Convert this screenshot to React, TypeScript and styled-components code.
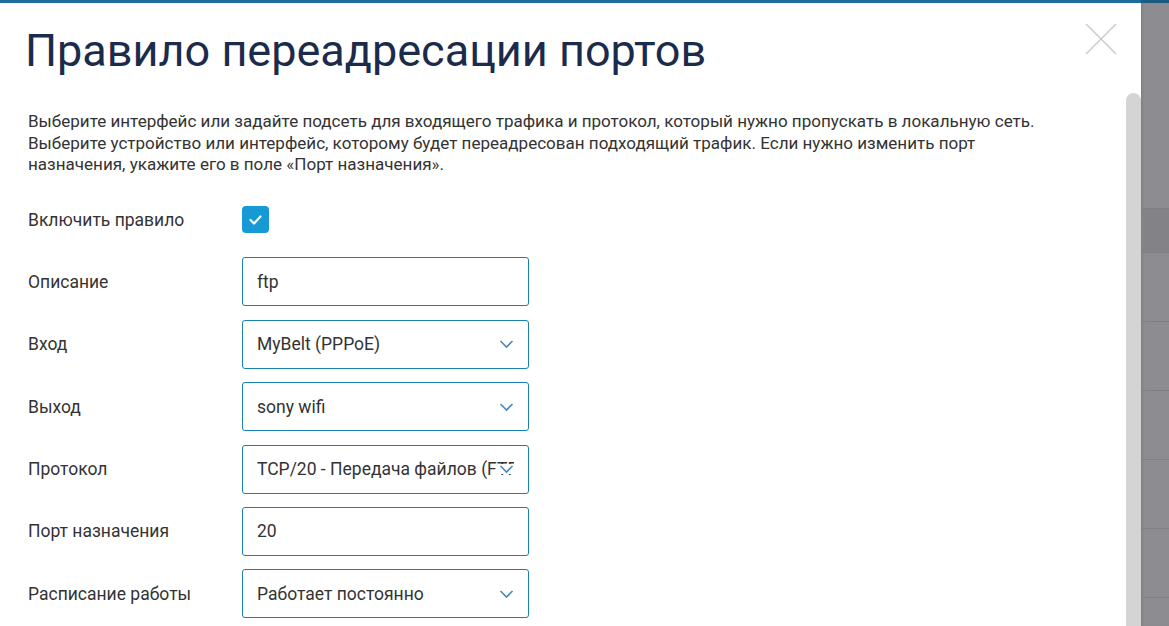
import React from "react";
import styled, { createGlobalStyle } from "styled-components";

const GlobalStyle = createGlobalStyle`
  html, body { margin: 0; padding: 0; background: #fff; overflow: hidden; }
  * { box-sizing: border-box; }
`;

const Page = styled.div`
  display: flex;
  width: 1169px;
  height: 626px;
  font-family: Roboto, "Noto Sans", sans-serif;
`;

const Modal = styled.div`
  position: relative;
  flex: 0 0 1141px;
  display: flex;
  background: #fff;
  border-top: 3px solid #1d6c9b;
`;

const Content = styled.div`
  flex: 1;
  padding: 22px 0 0 27px;
`;

const Title = styled.h1`
  margin: 0 0 0 -2px;
  font-size: 45px;
  line-height: 52px;
  font-weight: 400;
  color: #1b2b4b;
`;

const Intro = styled.p`
  margin: 34px 0 0 1px;
  width: 1045px;
  font-size: 17.05px;
  line-height: 21.5px;
  color: #333;
`;

const Form = styled.div`
  margin-top: 19.5px;
  display: flex;
  flex-direction: column;
  gap: 13.4px;
`;

const Row = styled.div`
  display: grid;
  grid-template-columns: 215px 287px;
  align-items: center;
  height: 49px;
`;

const Label = styled.span`
  padding-left: 1px;
  font-size: 17.5px;
  color: #333;
`;

const Field = styled.div`
  position: relative;
  height: 49px;
  display: flex;
  align-items: center;
  padding: 0 14px;
  border: 1px solid #1a80ad;
  border-radius: 3px;
  font-size: 17.5px;
  color: #333;
  white-space: nowrap;
  overflow: hidden;
`;

const SelectText = styled.span`
  overflow: hidden;
  flex: 1;
`;

const Chevron = styled.svg`
  position: absolute;
  right: 14px;
  top: 50%;
  margin-top: -5px;
  width: 15px;
  height: 10px;
  background: #fff;
`;

const Checkbox = styled.div`
  width: 27px;
  height: 27px;
  border-radius: 4px;
  background: #1799d6;
  display: flex;
  align-items: center;
  justify-content: center;
`;

const Close = styled.svg`
  position: absolute;
  top: 20px;
  right: 24px;
  width: 32px;
  height: 32px;
`;

const ScrollTrack = styled.div`
  flex: 0 0 15px;
  padding-top: 90px;
  display: flex;
`;

const Thumb = styled.div`
  flex: 1;
  background: #d4d4d4;
  border-radius: 8px 8px 0 0;
`;

const Overlay = styled.div`
  flex: 1;
  display: flex;
  flex-direction: column;
  background: #8d8d91;
  border-top: 3px solid #185a82;
  box-shadow: inset 3px 0 3px -2px rgba(0, 0, 0, 0.12);
`;

const BgRow = styled.div<{ $h: number; $dark?: boolean }>`
  flex: 0 0 ${(p) => p.$h}px;
  background: ${(p) => (p.$dark ? "#838387" : "transparent")};
  border-bottom: 1px solid #808084;
`;

const ChevronIcon = () => (
  <Chevron viewBox="0 0 15 10">
    <polyline points="1.5,2 7.5,8 13.5,2" fill="none" stroke="#4c88bd" strokeWidth="1.6" />
  </Chevron>
);

const selects = new Set(["Вход", "Выход", "Протокол", "Расписание работы"]);

const rows: [string, string][] = [
  ["Описание", "ftp"],
  ["Вход", "MyBelt (PPPoE)"],
  ["Выход", "sony wifi"],
  ["Протокол", "TCP/20 - Передача файлов (FTP)"],
  ["Порт назначения", "20"],
  ["Расписание работы", "Работает постоянно"],
];

export default function App() {
  return (
    <>
      <GlobalStyle />
      <Page>
        <Modal>
          <Content>
            <Title>Правило переадресации портов</Title>
            <Intro>
              Выберите интерфейс или задайте подсеть для входящего трафика и протокол, который нужно пропускать в локальную сеть.
              Выберите устройство или интерфейс, которому будет переадресован подходящий трафик. Если нужно изменить порт
              назначения, укажите его в поле «Порт назначения».
            </Intro>
            <Form>
              <Row>
                <Label>Включить правило</Label>
                <Checkbox>
                  <svg width="15" height="12" viewBox="0 0 15 12">
                    <polyline points="2.5,6 6,9.5 12.5,2.5" fill="none" stroke="#fff" strokeWidth="2.2" strokeLinecap="round" strokeLinejoin="round" />
                  </svg>
                </Checkbox>
              </Row>
              {rows.map(([label, value]) => (
                <Row key={label}>
                  <Label>{label}</Label>
                  <Field>
                    <SelectText>{value}</SelectText>
                    {selects.has(label) && <ChevronIcon />}
                  </Field>
                </Row>
              ))}
            </Form>
          </Content>
          <ScrollTrack>
            <Thumb />
          </ScrollTrack>
          <Close viewBox="0 0 32 32">
            <line x1="1" y1="1" x2="31" y2="31" stroke="#c9c9cc" strokeWidth="1.5" />
            <line x1="31" y1="1" x2="1" y2="31" stroke="#c9c9cc" strokeWidth="1.5" />
          </Close>
        </Modal>
        <Overlay>
          <BgRow $h={206} />
          <BgRow $h={44} $dark />
          <BgRow $h={69} />
          <BgRow $h={69} />
          <BgRow $h={69} />
          <BgRow $h={69} />
          <BgRow $h={69} />
        </Overlay>
      </Page>
    </>
  );
}
